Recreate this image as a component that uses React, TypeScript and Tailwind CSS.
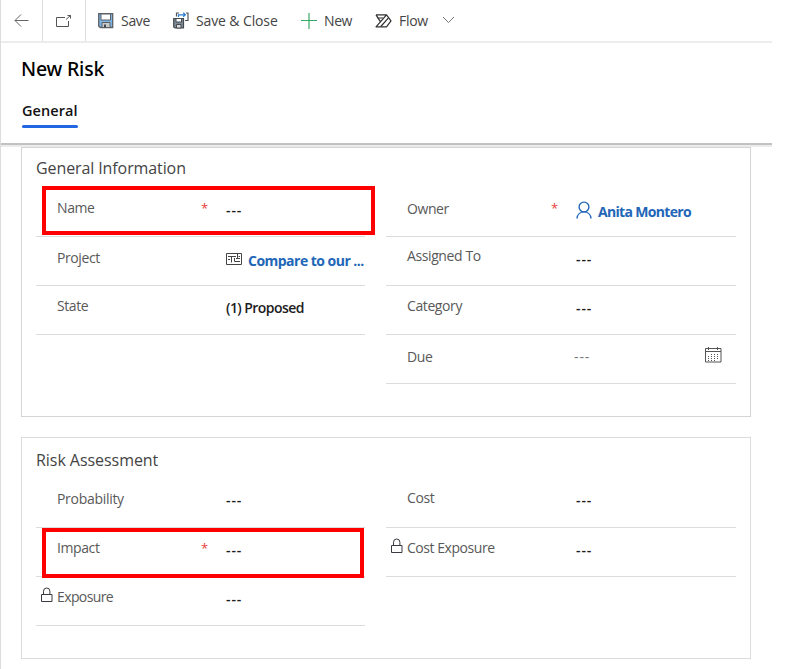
import type { ReactNode } from "react";

type FieldProps = {
  label: string;
  labelTrack?: string;
  labelTop?: string;
  valueTop?: string;
  required?: boolean;
  locked?: boolean;
  children: ReactNode;
};

function Lock() {
  return (
    <svg className="absolute top-[10px] left-[5px]" width="12" height="16" viewBox="0 0 12 16" fill="none" stroke="#3b3840">
      <path d="M.5 7.500h10.500v7H.5z" />
      <path d="M2.500 7V4.200a3.200 3.200 0 0 1 6.400 0V7" />
    </svg>
  );
}

function Field({ label, labelTrack = "tracking-[-0.4px]", labelTop = "pt-[10px]", valueTop = "pt-[12px]", required, locked, children }: FieldProps) {
  return (
    <div className="relative flex h-[49px] border-b border-[#dcdcdc] pl-[21px]">
      {locked && <Lock />}
      <div className={`w-[144px] shrink-0 text-[14px] text-[#595959] ${labelTop}`}>
        <span className={labelTrack}>{label}</span>
      </div>
      <div className="w-[25px] shrink-0 pt-[10px] text-[13px] text-[#e8403a]">{required ? "*" : ""}</div>
      <div className={`flex min-w-0 flex-1 text-[14px] font-semibold text-[#1c1c1c] ${valueTop}`}>{children}</div>
    </div>
  );
}

const Empty = () => <span className="tracking-[0.900px]">---</span>;

function SaveIcon() {
  return (
    <svg width="16" height="16" viewBox="0 0 16 16">
      <path d="M.7.700h14v13.800H2.200L.7 13z" fill="#7db4e4" stroke="#5c6166" strokeWidth="1.300" />
      <path d="M3 1h9.500v6H3z" fill="#fff" stroke="#5c6166" />
      <path d="M4 9.500h8v5H4z" fill="#c9c9c9" stroke="#5c6166" />
      <path d="M6 11.500h2v3H6z" fill="#3f464d" />
    </svg>
  );
}

function SaveCloseIcon() {
  return (
    <svg width="17" height="17" viewBox="0 0 17 17" fill="none">
      <path d="M3.500 4.500V1H6M13 1h2v7.500h-3" stroke="#50565c" strokeWidth="1.200" />
      <path d="M5.500 5V2.800H12M10.200.8l2.200 2-2.200 2" stroke="#2b7cd3" strokeWidth="1.200" />
      <path d="M.7 6.500h9.800V16H2l-1.300-1z" fill="#7d8a96" stroke="#454a50" strokeWidth="1.200" />
      <path d="M3 6.500h5.500v3.500H3z" fill="#fff" stroke="#454a50" />
      <path d="M3.500 12.500h4.500V16H3.500z" fill="#ddd" stroke="#454a50" />
    </svg>
  );
}

export default function App() {
  return (
    <div className="relative h-[669px] w-[800px] overflow-hidden bg-white font-['Open_Sans','Noto_Sans',sans-serif] leading-[20px] whitespace-nowrap">
      <div className="h-full w-[772px] border-l border-[#dcdcdc]">
        <header className="flex h-[43px] items-center border-b-2 border-[#ececec] text-[14px] text-[#444]">
          <div className="flex h-full w-[42px] items-center border-r border-[#dedede] pl-[13px]">
            <svg width="16" height="14" viewBox="0 0 16 14" fill="none" stroke="#666" strokeWidth="1">
              <path d="M14.500 6.500H1M7 .5l-6 6 6 6" />
            </svg>
          </div>
          <div className="flex h-full w-[43px] items-center border-r border-[#dedede] pl-[12px]">
            <svg width="17" height="14" viewBox="0 0 17 14" fill="none" stroke="#555">
              <path d="M10 3.500H1.500v9h12V7" />
              <path d="m11 5.500 4.500-4M12.500 1.500h3v3" />
            </svg>
          </div>
          <div className="flex w-[87px] items-center pl-[12px]">
            <SaveIcon />
            <span className="ml-[7px] tracking-[-0.300px]">Save</span>
          </div>
          <div className="flex w-[128px] items-center">
            <SaveCloseIcon />
            <span className="ml-[6px] tracking-[-0.120px]">Save &amp; Close</span>
          </div>
          <div className="flex w-[74px] items-center">
            <svg width="16" height="16" viewBox="0 0 16 16" stroke="#36a866" strokeWidth="1.200">
              <path d="M0 7.500h16M8 0v16" />
            </svg>
            <span className="ml-[7px] tracking-[-0.400px]">New</span>
          </div>
          <div className="flex items-center">
            <svg width="17" height="14" viewBox="0 0 17 14" fill="none" stroke="#303030" strokeWidth="1.200" strokeLinejoin="round">
              <path d="M1 .8h10.500L16 6.800l-4.500 6H1L11.500.8M1 .8l4.200 6.500" />
              <path d="M2.500 4H8M5.800 12.500l7.700-8.700" />
            </svg>
            <span className="ml-[7px] tracking-[-0.300px]">Flow</span>
            <svg className="-mt-[2px] ml-[14px]" width="13" height="8" viewBox="0 0 13 8" fill="none" stroke="#777">
              <path d="m1 1 5.500 5.500L12 1" />
            </svg>
          </div>
        </header>

        <div className="flex h-[100px] flex-col items-start pl-[20px]">
          <h1 className="mt-[14px] h-[24px] font-['Noto_Sans','Open_Sans',sans-serif] text-[19.500px] leading-[24px] font-medium text-black"><span className="tracking-[-0.200px]">New Risk</span></h1>
          <div className="mt-[20px] ml-[1px] h-[27px] w-[56px] text-[14.500px] font-semibold text-[#111]">
            <span className="block h-[24px] tracking-[0.050px]">General</span>
            <div className="h-[3px] rounded-full bg-[#2266e3]" />
          </div>
        </div>
        <div className="h-[2px] bg-[#c2c2c2]" />
        <div className="h-[2px] bg-[#ebebeb]" />

        <main className="pl-[20px]">
          <section className="h-[270px] w-[730px] border border-[#d4d4d4] px-[14px]">
            <h2 className="h-[40px] pt-[10px] text-[16px] text-[#444]"><span className="tracking-[-0.100px]">General Information</span></h2>
            <div className="flex gap-[21px]">
              <div className="w-[329px]">
                <Field label="Name" required><Empty /></Field>
                <Field label="Project" labelTop="pt-[11px]" valueTop="pt-[14px]">
                  <svg width="17" height="13" viewBox="0 0 17 13" className="mt-[2px] shrink-0" fill="none" stroke="#444">
                    <path d="M.5.500h15v11H.5zM2 3.500h8M5.500 3.500v6M2 6.500h2M8.500 5v3.500H12M11.500 1v4M10 5.500h4M12.500 3.500H14M12 8.500h2" />
                  </svg>
                  <span className="ml-[5px] font-bold tracking-[-0.520px] text-[#2266b8]">Compare to our ...</span>
                </Field>
                <Field label="State"><span className="tracking-[-0.550px]">(1) Proposed</span></Field>
              </div>
              <div className="w-[350px]">
                <Field label="Owner" labelTop="pt-[11px]" required valueTop="pt-[14px]">
                  <svg className="-mt-[1px]" width="17" height="18" viewBox="0 0 17 18" fill="none" stroke="#2266b8" strokeWidth="1.400">
                    <circle cx="8" cy="6" r="4.900" />
                    <path d="M1 17.500c.3-4 3.200-6.600 7-6.600s6.700 2.600 7 6.600" />
                  </svg>
                  <span className="ml-[5px] font-bold tracking-[-0.680px] text-[#2266b8]">Anita Montero</span>
                </Field>
                <Field label="Assigned To" labelTop="pt-[9px]"><Empty /></Field>
                <Field label="Category"><Empty /></Field>
                <Field label="Due" labelTop="pt-[12px]">
                  <span className="-ml-[2px] flex-1 font-normal tracking-[0.900px] text-[#777]">---</span>
                  <svg className="mr-[14px]" width="17" height="16" viewBox="0 0 17 16" fill="none" stroke="#555">
                    <path d="M.5 1.500h15.500v13.500H.5zM.5 4.500H16M3.500 0v3M12.500 0v3" />
                    <path d="M6 7.500h8M3 9.500h11M3 11.500h11M3 13.500h8" strokeDasharray="1 2" />
                  </svg>
                </Field>
              </div>
            </div>
          </section>

          <section className="mt-[20px] h-[222px] w-[730px] border border-[#dcdcdc] px-[14px]">
            <h2 className="h-[41px] pt-[12px] text-[16px] text-[#444]"><span className="tracking-[-0.050px]">Risk Assessment</span></h2>
            <div className="flex gap-[21px]">
              <div className="w-[329px]">
                <Field label="Probability" labelTrack="tracking-[-0.300px]" valueTop="pt-[11px]"><Empty /></Field>
                <Field label="Impact" required><Empty /></Field>
                <Field label="Exposure" labelTrack="tracking-[-0.600px]" locked><Empty /></Field>
              </div>
              <div className="w-[350px]">
                <Field label="Cost" labelTop="pt-[9px]" valueTop="pt-[11px]"><Empty /></Field>
                <Field label="Cost Exposure" labelTrack="tracking-[-0.450px]" locked><Empty /></Field>
              </div>
            </div>
          </section>
        </main>
      </div>
      <div className="absolute top-[186px] left-[42px] h-[49px] w-[333px] border-4 border-[#ff0000]" />
      <div className="absolute top-[528px] left-[42px] h-[50px] w-[322px] border-4 border-[#ff0000]" />
    </div>
  );
}
